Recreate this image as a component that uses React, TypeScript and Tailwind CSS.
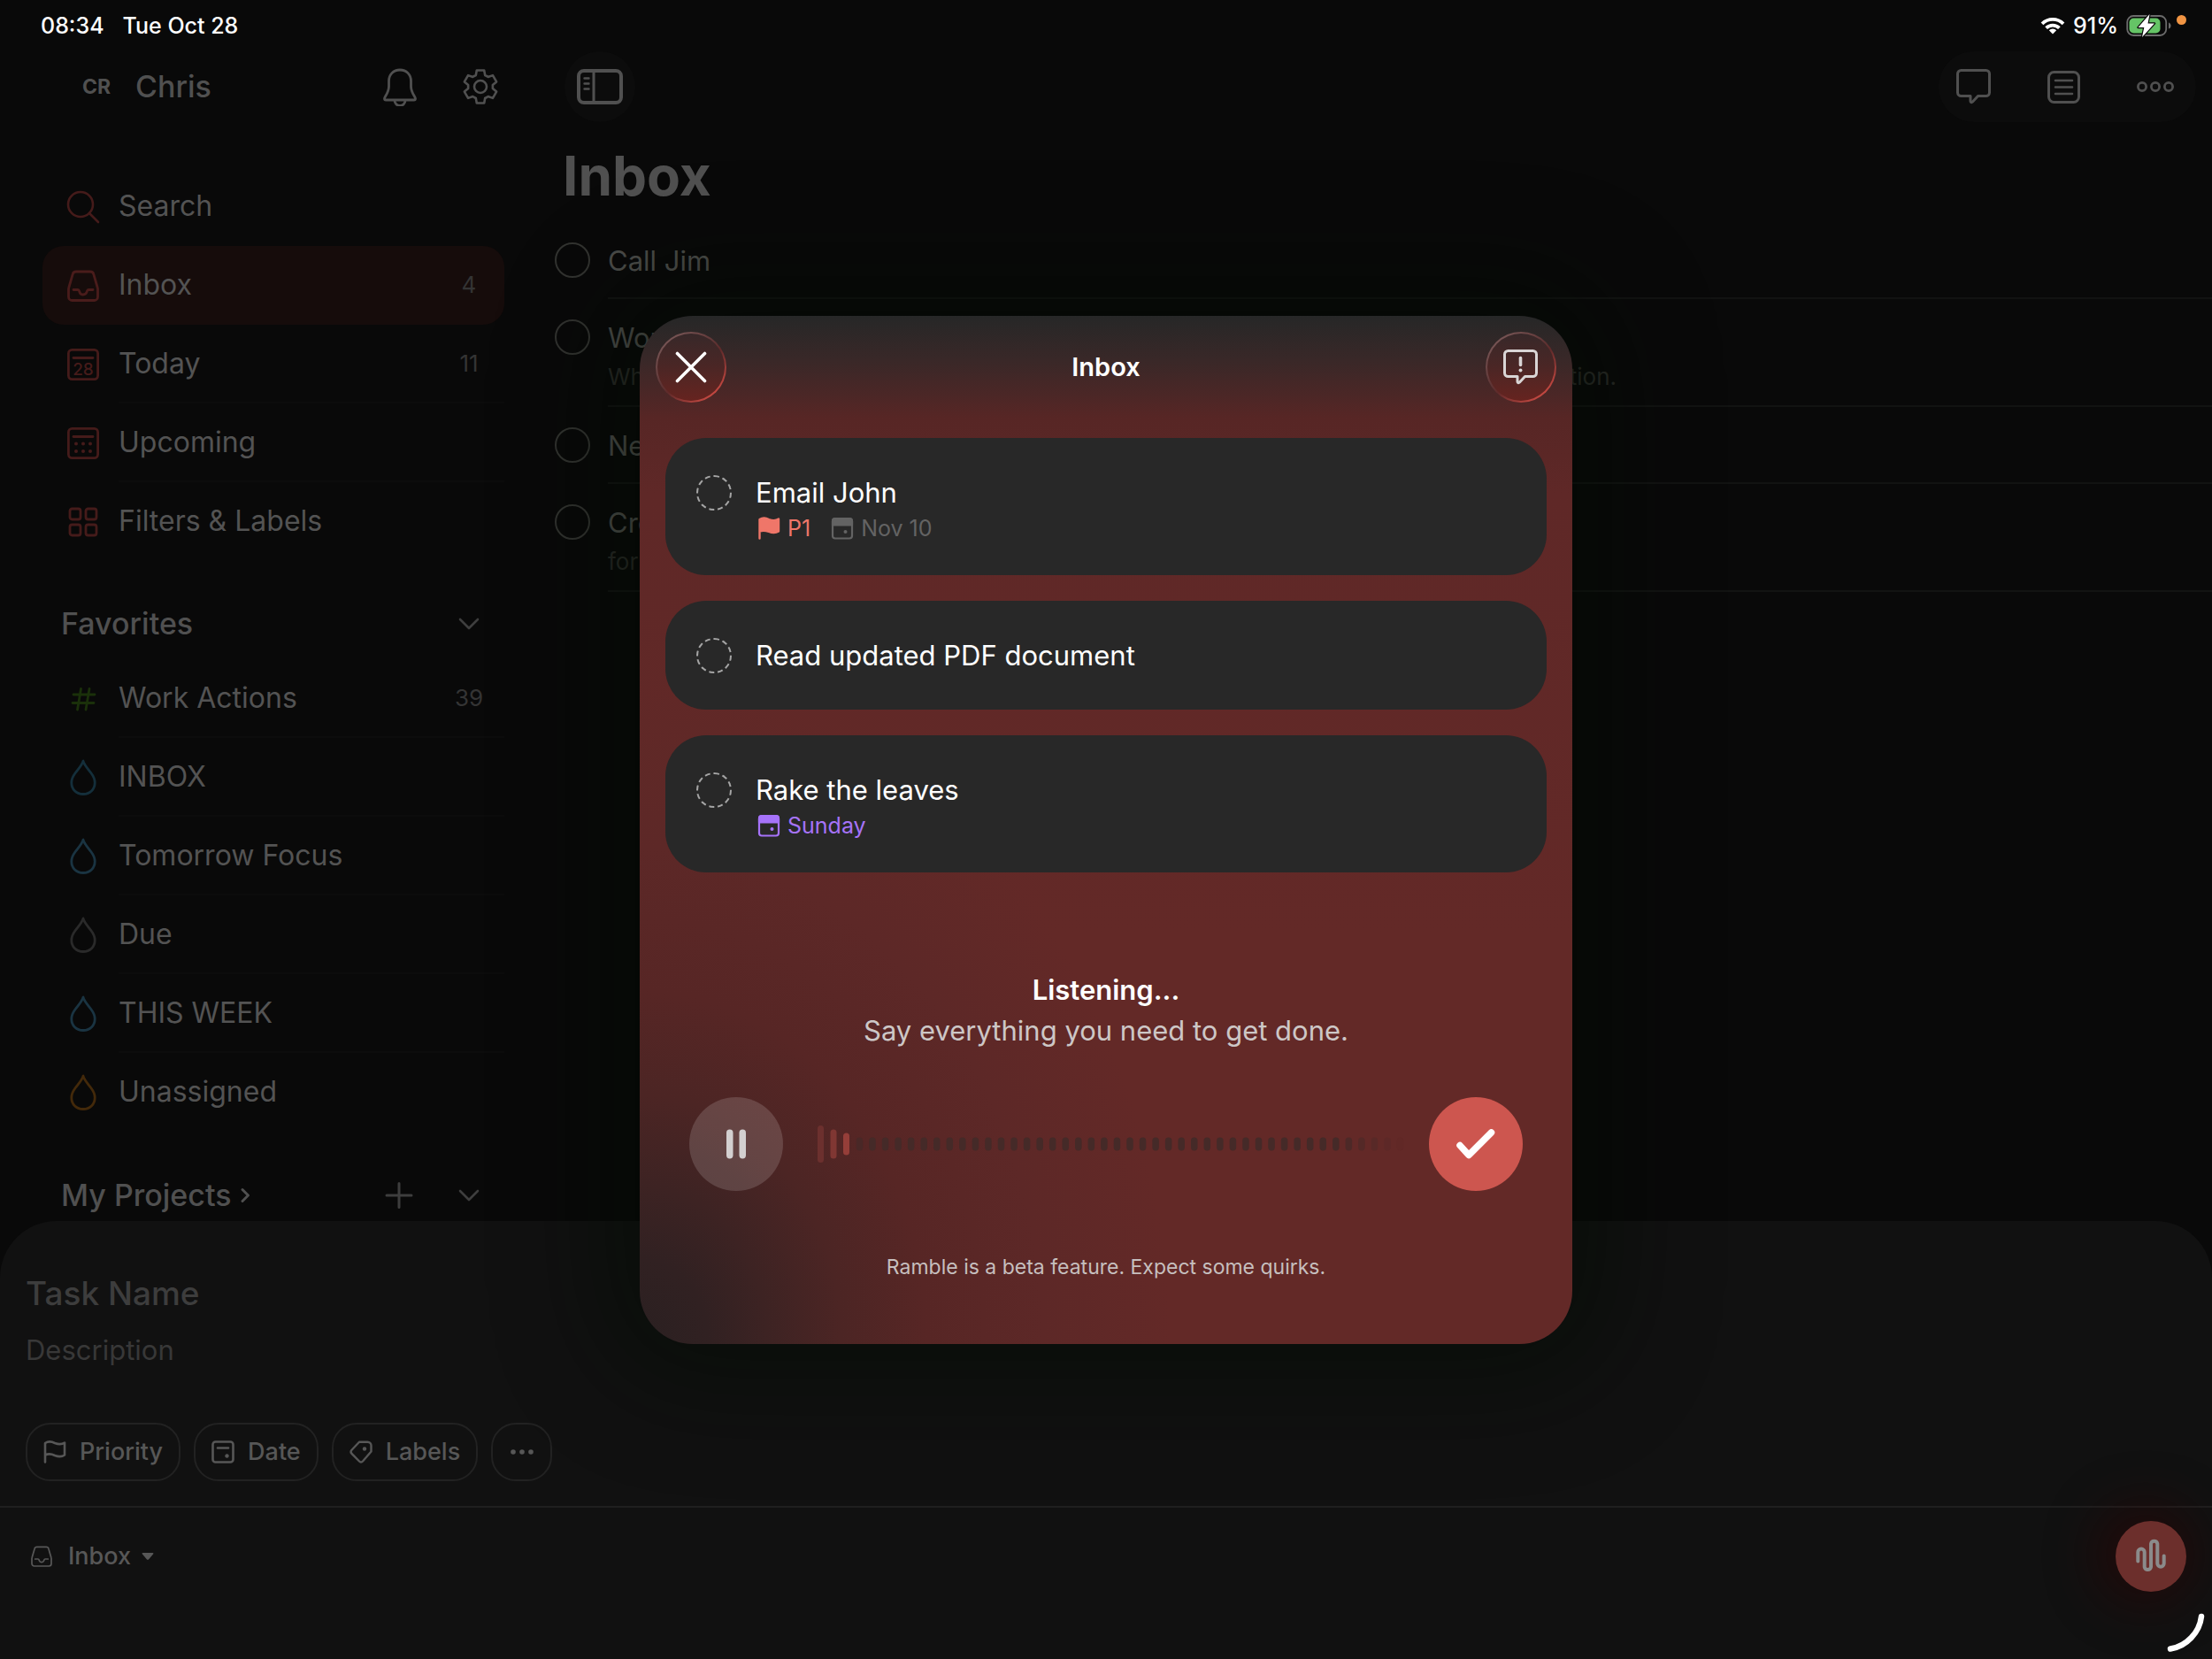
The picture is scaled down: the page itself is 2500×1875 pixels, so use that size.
import type { ReactNode } from "react";

type IconProps = { w: number; h: number; sw?: number; className?: string; children: ReactNode };

function Icon({ w, h, sw = 3, className = "", children }: IconProps) {
  return (
    <svg
      width={w}
      height={h}
      viewBox={`0 0 ${w} ${h}`}
      fill="none"
      stroke="currentColor"
      strokeWidth={sw}
      strokeLinecap="round"
      strokeLinejoin="round"
      aria-hidden="true"
      className={`shrink-0 ${className}`}
    >
      {children}
    </svg>
  );
}

const TRAY_BODY =
  "M10 2h16a4 4 0 0 1 3.9 3.1L34.2 20a6 6 0 0 1 .3 2v8.5a4 4 0 0 1-4 4h-25a4 4 0 0 1-4-4V22a6 6 0 0 1 .3-2L6.1 5.1A4 4 0 0 1 10 2z";
const TRAY_SLOT = "M7 22.5h5c1.4 0 1.5 1.2 2 2.7.5 1.6 1.8 2.8 4 2.8s3.5-1.2 4-2.8c.5-1.5.6-2.7 2-2.7h5";

function SearchIcon() {
  return (
    <Icon w={38} h={38} sw={2.6}>
      <circle cx="16" cy="16" r="14" />
      <path d="M26 26l10 10" />
    </Icon>
  );
}

function TrayIcon() {
  return (
    <Icon w={36} h={36} sw={2.8}>
      <path d={TRAY_BODY} />
      <path d={TRAY_SLOT} />
    </Icon>
  );
}

function SmallTrayIcon() {
  return (
    <svg width="24" height="24" viewBox="0 0 36 36" fill="none" stroke="currentColor" strokeWidth="2.6" strokeLinecap="round" strokeLinejoin="round" aria-hidden="true">
      <path d={TRAY_BODY} />
      <path d={TRAY_SLOT} />
    </svg>
  );
}

function TodayIcon() {
  return (
    <Icon w={36} h={36} sw={2.8}>
      <rect x="1.4" y="1.4" width="33.2" height="33.2" rx="4" />
      <path d="M7 10.5h22" />
      <text x="18" y="29.5" textAnchor="middle" fontSize="19" fontWeight="500" fill="currentColor" stroke="none">
        28
      </text>
    </Icon>
  );
}

function UpcomingIcon() {
  return (
    <Icon w={36} h={36} sw={2.8}>
      <rect x="1.4" y="1.4" width="33.2" height="33.2" rx="4" />
      <path d="M7 10.5h22" />
      <g fill="currentColor" stroke="none">
        {[10, 18, 26].map((x) => (
          <g key={x}>
            <circle cx={x} cy="18.5" r="2" />
            <circle cx={x} cy="27" r="2" />
          </g>
        ))}
      </g>
    </Icon>
  );
}

function GridIcon() {
  return (
    <Icon w={36} h={36} sw={2.8}>
      <rect x="3" y="3" width="12" height="12" rx="2.5" />
      <rect x="21" y="3" width="12" height="12" rx="2.5" />
      <rect x="3" y="21" width="12" height="12" rx="2.5" />
      <rect x="21" y="21" width="12" height="12" rx="2.5" />
    </Icon>
  );
}

function HashIcon() {
  return (
    <Icon w={36} h={36} sw={2.8}>
      <path d="M15.5 6.5L11.5 30M25 6.5L21 30M7 13h24M6 22.5h24" />
    </Icon>
  );
}

function DropIcon() {
  return (
    <Icon w={36} h={42} sw={2.8}>
      <path d="M18 2c-1 4.500-5.500 9-8.800 13.500C6.200 19.500 4.800 22.500 4.800 26.500c0 8 5.700 13 13.200 13s13.200-5 13.200-13c0-4-1.400-7-4.400-11C23.500 11 19 6.500 18 2z" />
    </Icon>
  );
}

function BellIcon() {
  return (
    <Icon w={38} h={44} sw={2.8}>
      <path d="M19 3c7.500 0 12.500 5.500 12.500 12.500v6c0 4.500 1.500 7.500 3.700 11 .9 1.500 1.300 2.200 1.300 3 0 1-.7 1.500-1.700 1.500H3.200c-1 0-1.700-.5-1.700-1.500 0-.8.4-1.500 1.300-3 2.200-3.500 3.700-6.500 3.700-11v-6C6.500 8.500 11.500 3 19 3z" />
      <path d="M13 37.500a6 6 0 0 0 12 0" />
    </Icon>
  );
}

function gearPath() {
  const tooth: [number, number][] = [
    [-5.2, -13],
    [-4.2, -18.5],
    [4.2, -18.5],
    [5.2, -13],
  ];
  const points: string[] = [];
  for (let i = 0; i < 6; i++) {
    const a = (i * Math.PI) / 3;
    for (const [x, y] of tooth) {
      points.push(`${20 + x * Math.cos(a) - y * Math.sin(a)} ${20 + x * Math.sin(a) + y * Math.cos(a)}`);
    }
  }
  return `M${points.join("L")}Z`;
}

function GearIcon() {
  return (
    <Icon w={40} h={40} sw={2.6}>
      <path d={gearPath()} />
      <circle cx="20" cy="20" r="7" />
    </Icon>
  );
}

function SidebarIcon() {
  return (
    <Icon w={52} h={40} sw={4}>
      <rect x="2" y="2" width="48" height="36" rx="6" />
      <path d="M19 2v36" strokeWidth="3" />
      <path d="M8.500 10.500h5M8.500 16.500h5M8.500 22.500h5" strokeWidth="2.4" />
    </Icon>
  );
}

const BUBBLE = "M5.500 1.500h28a4 4 0 0 1 4 4v21a4 4 0 0 1-4 4h-9L18.500 37c-1.200 1.200-2.500.6-2.500-.8v-5.700H5.500a4 4 0 0 1-4-4v-21a4 4 0 0 1 4-4z";

function CommentIcon() {
  return (
    <Icon w={39} h={40} sw={3}>
      <path d={BUBBLE} />
    </Icon>
  );
}

function FeedbackIcon() {
  return (
    <Icon w={39} h={40} sw={3}>
      <path d={BUBBLE} />
      <path d="M19.500 9.500v8" strokeWidth="3.6" />
      <circle cx="19.500" cy="23.500" r="2" fill="currentColor" stroke="none" />
    </Icon>
  );
}

function ListIcon() {
  return (
    <Icon w={37} h={37} sw={3}>
      <rect x="1.5" y="1.5" width="34" height="34" rx="6" />
      <path d="M9 11h19M9 18.500h19M9 26h19" strokeWidth="2.6" />
    </Icon>
  );
}

function RingsIcon() {
  return (
    <Icon w={42} h={14} sw={2.8}>
      <circle cx="6" cy="7" r="4.6" />
      <circle cx="21" cy="7" r="4.6" />
      <circle cx="36" cy="7" r="4.6" />
    </Icon>
  );
}

function ChevronDown() {
  return (
    <Icon w={26} h={16} sw={2.6}>
      <path d="M3 3l10 10L23 3" />
    </Icon>
  );
}

function FlagOutline() {
  return (
    <Icon w={26} h={26} sw={2.6}>
      <path d="M2 24.500V3c3-2 7-2 11 0 4 1.500 8 1.500 11-.500v14c-3 2-7 2-11 .500-4-2-8-2-11-.500" />
    </Icon>
  );
}

function DateOutline() {
  return (
    <Icon w={26} h={26} sw={2.6}>
      <rect x="1.5" y="1.5" width="23" height="23" rx="3" />
      <path d="M7 8.500h12" />
      <circle cx="17.5" cy="17.5" r="2.2" fill="currentColor" stroke="none" />
    </Icon>
  );
}

function TagOutline() {
  return (
    <Icon w={26} h={26} sw={2.4}>
      <path d="M11 1.800h9.500a4 4 0 0 1 4 4v6.700L15 23.500c-1.200 1.300-2.800 1.300-4 0l-8.500-8.700c-1.200-1.200-1.200-2.500-.2-3.800z" />
      <circle cx="17" cy="9.5" r="2.2" fill="currentColor" stroke="none" />
    </Icon>
  );
}

function FlagSolid() {
  return (
    <Icon w={26} h={26} sw={2.4}>
      <path d="M2.500 24.500V3c3-1.800 7-1.800 10.500 0 4 1.500 8 1.500 11-.500v14c-3 2-7 2-11 .500-4-1.500-7.500-1.500-10.500-.500" fill="currentColor" />
    </Icon>
  );
}

function DateSolid() {
  return (
    <Icon w={26} h={26} sw={2.2}>
      <rect x="2" y="2" width="22" height="22.5" rx="3" />
      <path d="M2 5a3 3 0 0 1 3-3h16a3 3 0 0 1 3 3v4.500H2z" fill="currentColor" />
      <circle cx="16.5" cy="17" r="2" fill="currentColor" stroke="none" />
    </Icon>
  );
}

function WifiIcon() {
  return (
    <svg width="28" height="20" viewBox="0 0 28 20" fill="none" stroke="currentColor" strokeWidth="3.8" aria-hidden="true">
      <path d="M2 7.800a17 17 0 0 1 24 0" />
      <path d="M6.600 12.600a10.500 10.500 0 0 1 14.800 0" />
      <path d="M14 19.500l-4.200-4.200a6 6 0 0 1 8.400 0z" fill="currentColor" stroke="none" />
    </svg>
  );
}

function BatteryIcon() {
  return (
    <svg width="52" height="26" viewBox="0 0 52 26" fill="none" aria-hidden="true">
      <rect x="1.2" y="2" width="44" height="22" rx="7" stroke="#6b6b6b" strokeWidth="1.8" />
      <path d="M48 9.500c3.400 1 3.400 6 0 7z" fill="#6b6b6b" />
      <rect x="3.5" y="4.5" width="35" height="17" rx="5" fill="#65c466" />
      <path d="M26.500 0L13.500 15h6.800L18 26l14-15.500h-7.500z" fill="#fff" stroke="#090909" strokeWidth="2.4" strokeLinejoin="round" paintOrder="stroke" />
    </svg>
  );
}

function VoiceIcon() {
  return (
    <Icon w={36} h={42} sw={4}>
      <path d="M3.300 26.500V16.300a3.700 3.700 0 0 1 7.400 0V33a3.700 3.700 0 0 0 7.300 0V6.800a3.700 3.700 0 0 1 7.300 0V29a3.700 3.700 0 0 0 7.400 0V20.500" />
    </Icon>
  );
}

const FADE_OUT = [0.75, 0.5, 0.35, 0.2, 0.06];

function Waveform() {
  const quiet = Array.from({ length: 43 }, (_, i) => i);
  return (
    <svg viewBox="0 0 676 46" className="h-[46px] min-w-0 flex-1" role="img" aria-label="Microphone level">
      <rect x="9" y="2" width="7" height="42" rx="3.5" fill="#6c302e" />
      <rect x="23.5" y="6.5" width="7" height="33" rx="3.5" fill="#803733" />
      <rect x="38" y="10.5" width="7" height="25" rx="3.5" fill="#953e39" />
      {quiet.map((i) => (
        <rect
          key={i}
          x={52.7 + i * 14.55}
          y="15.5"
          width="7.5"
          height="15"
          rx="3.7"
          fill="#452a28"
          opacity={i === 0 ? 0.7 : i > 37 ? FADE_OUT[i - 38] : 1}
        />
      ))}
    </svg>
  );
}

type NavItem = { label: string; icon: ReactNode; tint: string; count?: string; active?: boolean; line?: boolean };

const mainNav: NavItem[] = [
  { label: "Search", icon: <SearchIcon />, tint: "text-[#451b1a]" },
  { label: "Inbox", icon: <TrayIcon />, tint: "text-[#4a1c1b]", count: "4", active: true },
  { label: "Today", icon: <TodayIcon />, tint: "text-[#451b1a]", count: "11", line: true },
  { label: "Upcoming", icon: <UpcomingIcon />, tint: "text-[#451b1a]", line: true },
  { label: "Filters & Labels", icon: <GridIcon />, tint: "text-[#451b1a]" },
];

const favorites: NavItem[] = [
  { label: "Work Actions", icon: <HashIcon />, tint: "text-[#1a300a]", count: "39", line: true },
  { label: "INBOX", icon: <DropIcon />, tint: "text-[#142f3b]", line: true },
  { label: "Tomorrow Focus", icon: <DropIcon />, tint: "text-[#1a3442]", line: true },
  { label: "Due", icon: <DropIcon />, tint: "text-[#2a2a2a]", line: true },
  { label: "THIS WEEK", icon: <DropIcon />, tint: "text-[#1a3442]", line: true },
  { label: "Unassigned", icon: <DropIcon />, tint: "text-[#43290a]" },
];

function NavRow({ item }: { item: NavItem }) {
  return (
    <li>
      <a
        href="#"
        aria-current={item.active ? "page" : undefined}
        className={`flex h-[89px] items-center gap-[22px] rounded-3xl pl-7 ${item.active ? "bg-[#160c0b]" : ""}`}
      >
        <span className={`flex w-9 justify-center ${item.tint}`}>{item.icon}</span>
        <span className={`flex h-full flex-1 items-center border-b-2 ${item.line ? "border-[#0c0c0c]" : "border-transparent"}`}>
          <span className="flex-1 text-[32px] leading-10 text-[#535353]">{item.label}</span>
          {item.count && <span className="w-20 text-center text-[26px] leading-8 text-[#343434]">{item.count}</span>}
        </span>
      </a>
    </li>
  );
}

function Sidebar() {
  return (
    <aside className="flex w-[600px] shrink-0 flex-col pr-[30px] pl-12">
      <header className="flex h-20 items-center pl-[45px] text-[#505050]">
        <span className="w-[60px] text-[23px] font-bold">CR</span>
        <span className="flex-1 text-[34px] leading-10 font-medium">Chris</span>
        <button type="button" aria-label="Notifications" className="mr-[52px]">
          <BellIcon />
        </button>
        <button type="button" aria-label="Settings" className="mr-[7px]">
          <GearIcon />
        </button>
      </header>
      <nav aria-label="Main" className="mt-[51px]">
        <ul>
          {mainNav.map((item) => (
            <NavRow key={item.label} item={item} />
          ))}
        </ul>
        <div className="mt-[42px] mb-[11px] flex h-[58px] items-center pr-[27px] pl-[21px]">
          <h2 className="flex-1 text-[34px] leading-10 font-medium text-[#505050]">Favorites</h2>
          <button type="button" aria-label="Collapse favorites" className="text-[#3e3e3e]">
            <ChevronDown />
          </button>
        </div>
        <ul>
          {favorites.map((item) => (
            <NavRow key={item.label} item={item} />
          ))}
        </ul>
        <div className="mt-[43px] flex h-[58px] items-center pr-[27px] pl-[21px]">
          <h2 className="flex flex-1 items-center gap-2.5 text-[34px] leading-10 font-medium text-[#505050]">
            My Projects
            <Icon w={12} h={18} sw={3}>
              <path d="M3 2.500L9.500 9 3 15.500" />
            </Icon>
          </h2>
          <button type="button" aria-label="Add project" className="mr-[50px] text-[#3e3e3e]">
            <Icon w={32} h={32} sw={3}>
              <path d="M16 2.500v27M2 16h28" />
            </Icon>
          </button>
          <button type="button" aria-label="Collapse projects" className="text-[#3e3e3e]">
            <ChevronDown />
          </button>
        </div>
      </nav>
    </aside>
  );
}

type Task = { id: string; title: string; note?: ReactNode };

const tasks: Task[] = [
  { id: "t1", title: "Call Jim" },
  {
    id: "t2",
    title: "Workshop outline",
    note: (
      <>
        <span>What to cover before the</span>
        <span>presentation.</span>
      </>
    ),
  },
  { id: "t3", title: "New notes" },
  { id: "t4", title: "Create outline", note: <span>for Friday</span> },
];

function TaskList() {
  return (
    <ul className="mt-3">
      {tasks.map((task) => (
        <li key={task.id} className="flex gap-5 pl-[27px]">
          <input
            id={task.id}
            type="checkbox"
            className="mt-[23px] size-10 shrink-0 appearance-none rounded-full border-2 border-[#323330]"
          />
          <div className={`flex-1 border-b-2 border-[#121312] pt-[22px] ${task.note ? "pb-[14px]" : "pb-[19px]"}`}>
            <label htmlFor={task.id} className="block text-[31px] leading-[44px] text-[#4b4c49]">
              {task.title}
            </label>
            {task.note && (
              <p className="flex max-w-[1140px] justify-between pt-1 text-[26px] leading-9 text-[#282926]">{task.note}</p>
            )}
          </div>
        </li>
      ))}
    </ul>
  );
}

function Main() {
  return (
    <main className="min-w-0 flex-1">
      <div className="flex h-20 items-center justify-between pr-[18px] pl-[38px] text-[#505050]">
        <button type="button" aria-label="Toggle sidebar" className="flex size-20 items-center justify-center rounded-full bg-[#0c0c0c]">
          <SidebarIcon />
        </button>
        <div className="flex h-20 items-center gap-16 rounded-full bg-[#0c0c0c] pr-[25px] pl-5">
          <button type="button" aria-label="Comments">
            <CommentIcon />
          </button>
          <button type="button" aria-label="View options">
            <ListIcon />
          </button>
          <button type="button" aria-label="More">
            <RingsIcon />
          </button>
        </div>
      </div>
      <h1 className="mt-[21px] pl-9 text-[62px] leading-[80px] font-bold text-[#505050]">Inbox</h1>
      <TaskList />
    </main>
  );
}

function Chip({ icon, label }: { icon: ReactNode; label: string }) {
  return (
    <button type="button" className="flex h-[66px] items-center gap-[15px] rounded-[28px] border-2 border-[#222222] px-[18px] text-[27px] leading-8 font-medium text-[#575757]">
      {icon}
      {label}
    </button>
  );
}

function QuickAdd() {
  return (
    <form className="flex shrink-0 flex-col rounded-t-[64px] bg-[#111111]" onSubmit={(e) => e.preventDefault()}>
      <div className="flex flex-col px-[29px] pt-[58px]">
        <input
          aria-label="Task name"
          placeholder="Task Name"
          className="h-12 bg-transparent text-[37px] font-medium placeholder:text-[#3d3d3d]"
        />
        <input
          aria-label="Description"
          placeholder="Description"
          className="mt-5 h-10 bg-transparent text-[31px] placeholder:text-[#383838]"
        />
        <div className="mt-[62px] flex gap-[15px]">
          <Chip icon={<FlagOutline />} label="Priority" />
          <Chip icon={<DateOutline />} label="Date" />
          <Chip icon={<TagOutline />} label="Labels" />
          <button type="button" aria-label="More options" className="flex h-[66px] w-[69px] items-center justify-center rounded-[28px] border-2 border-[#222222] text-[#575757]">
            <svg width="28" height="8" viewBox="0 0 28 8" fill="currentColor" aria-hidden="true">
              <circle cx="4" cy="4" r="2.8" />
              <circle cx="14" cy="4" r="2.8" />
              <circle cx="24" cy="4" r="2.8" />
            </svg>
          </button>
        </div>
      </div>
      <div className="mt-7 flex h-[173px] items-start justify-between border-t-2 border-[#1f1f1f] pt-[15px] pr-[29px] pl-[35px]">
        <button type="button" className="flex h-20 items-center gap-[18px] text-[27px] leading-8 font-medium text-[#575757]">
          <SmallTrayIcon />
          <span className="flex items-center gap-3">
            Inbox
            <svg width="14" height="8" viewBox="0 0 14 8" fill="currentColor" aria-hidden="true">
              <path d="M1.500 0h11c1 0 1.200 1 .6 1.600L8.200 7.200c-.7.700-1.700.700-2.400 0L.9 1.600C.3 1 .5 0 1.500 0z" />
            </svg>
          </span>
        </button>
        <button
          type="button"
          aria-label="Ramble"
          className="flex size-20 items-center justify-center rounded-full bg-[#6c2f2c] text-[#8b8b8b] shadow-[-6px_-2px_60px_16px_rgba(50,0,0,0.45)]"
        >
          <VoiceIcon />
        </button>
      </div>
    </form>
  );
}

function RoundGlassButton({ label, children }: { label: string; children: ReactNode }) {
  return (
    <button
      type="button"
      aria-label={label}
      className="size-20 rounded-full bg-[linear-gradient(140deg,#7d5d5d_5%,#5f3535_45%,#5f2a2a_55%,#d24c44_90%)] p-[2px]"
    >
      <span className="flex size-full items-center justify-center rounded-full bg-linear-to-b from-[#372829] via-[#4b2625] to-[#66231f]">
        {children}
      </span>
    </button>
  );
}

type Captured = { id: string; title: string; priority?: string; date?: string; dateTint?: string };

const captured: Captured[] = [
  { id: "c1", title: "Email John", priority: "P1", date: "Nov 10", dateTint: "text-[#636363]" },
  { id: "c2", title: "Read updated PDF document" },
  { id: "c3", title: "Rake the leaves", date: "Sunday", dateTint: "text-[#a673fa]" },
];

function RambleDialog() {
  return (
    <section
      role="dialog"
      aria-modal="true"
      aria-labelledby="ramble-title"
      className="pointer-events-auto w-[1054px] rounded-[60px] bg-[radial-gradient(600px_740px_at_0%_100%,#2a2021_0%,#312122_13%,#3d2323_24%,#4c2524_38%,#572625_54%,#5d2827_76%,rgba(98,41,39,0)_100%),linear-gradient(to_bottom,#262727_0px,#392828_50px,#572625_115px,#5f2827_200px,#632927_700px)] shadow-[0_0_120px_44px_rgba(2,10,0,0.45)]"
    >
      <header className="flex items-center justify-between px-[18px] pt-[18px]">
        <RoundGlassButton label="Close">
          <Icon w={36} h={36} sw={3.6} className="text-white">
            <path d="M2.500 2.500l31 31M33.500 2.500l-31 31" />
          </Icon>
        </RoundGlassButton>
        <h2 id="ramble-title" className="text-[29px] leading-10 font-semibold text-white">
          Inbox
        </h2>
        <RoundGlassButton label="Send feedback">
          <span className="text-[#d9d5d5]">
            <FeedbackIcon />
          </span>
        </RoundGlassButton>
      </header>
      <ul className="mt-10 flex flex-col gap-[29px] px-[29px]">
        {captured.map((task) => (
          <li key={task.id} className="flex gap-[27px] rounded-[46px] bg-[#282828] px-[35px] pt-[42px] pb-[37px]">
            <input
              id={task.id}
              type="checkbox"
              className="size-10 shrink-0 appearance-none rounded-full border-2 border-dashed border-[#a5a5a5]"
            />
            <div>
              <label htmlFor={task.id} className="block pb-1 text-[31px] leading-10 text-white">
                {task.title}
              </label>
              {task.date && (
                <div className="flex gap-[23px] pl-0.5 text-[25px] leading-8">
                  {task.priority && (
                    <span className="flex items-center gap-2 text-[#ef7669]">
                      <FlagSolid />
                      {task.priority}
                    </span>
                  )}
                  <span className={`flex items-center gap-2 ${task.dateTint ?? ""}`}>
                    <DateSolid />
                    {task.date}
                  </span>
                </div>
              )}
            </div>
          </li>
        ))}
      </ul>
      <div className="pt-[110px] text-center">
        <p className="text-[31px] leading-[46px] font-semibold text-white">Listening...</p>
        <p className="text-[31px] leading-[46px] text-[#cdc7c6]">Say everything you need to get done.</p>
      </div>
      <div className="mt-[52px] flex items-center px-14">
        <button type="button" aria-label="Pause" className="flex size-[106px] shrink-0 items-center justify-center rounded-full bg-white/15">
          <svg width="24" height="34" viewBox="0 0 24 34" fill="#d3d0d0" aria-hidden="true">
            <rect x="1" y="0.5" width="7.5" height="33" rx="3.7" />
            <rect x="15.5" y="0.5" width="7.5" height="33" rx="3.7" />
          </svg>
        </button>
        <div className="flex min-w-0 flex-1 pr-[24px] pl-[30px]">
          <Waveform />
        </div>
        <button type="button" aria-label="Done" className="flex size-[106px] shrink-0 items-center justify-center rounded-full bg-[#cd564f]">
          <Icon w={46} h={36} sw={7.5} className="text-white">
            <path d="M5 19.500l10 11L40.500 5" />
          </Icon>
        </button>
      </div>
      <p className="pt-[66px] pb-[67px] text-center text-[23px] leading-10 text-[#c6bfbe]">
        Ramble is a beta feature. Expect some quirks.
      </p>
    </section>
  );
}

function StatusBar() {
  return (
    <div className="flex h-[58px] items-center justify-between pr-[29px] pl-[46px] text-[25px] leading-8 font-medium text-white">
      <div className="flex gap-[21px]">
        <span>08:34</span>
        <span>Tue Oct 28</span>
      </div>
      <div className="flex items-center gap-[9px]">
        <WifiIcon />
        <span>91%</span>
        <BatteryIcon />
        <span className="mb-3.5 -ml-1 size-[11px] rounded-full bg-[#f09443]" />
      </div>
    </div>
  );
}

export default function App() {
  return (
    <div className="relative flex min-h-screen flex-col overflow-hidden bg-[#090909] font-[Inter,sans-serif]">
      <StatusBar />
      <div className="flex flex-1">
        <Sidebar />
        <Main />
      </div>
      <QuickAdd />
      <div className="pointer-events-none absolute inset-0 flex items-center justify-center">
        <RambleDialog />
      </div>
      <svg className="absolute right-[6px] bottom-[6px] text-white" width="46" height="46" viewBox="0 0 46 46" fill="none" stroke="currentColor" strokeWidth="6.5" strokeLinecap="round" aria-hidden="true">
        <path d="M40 4C38 22 23 38 5 40.500" />
      </svg>
    </div>
  );
}
